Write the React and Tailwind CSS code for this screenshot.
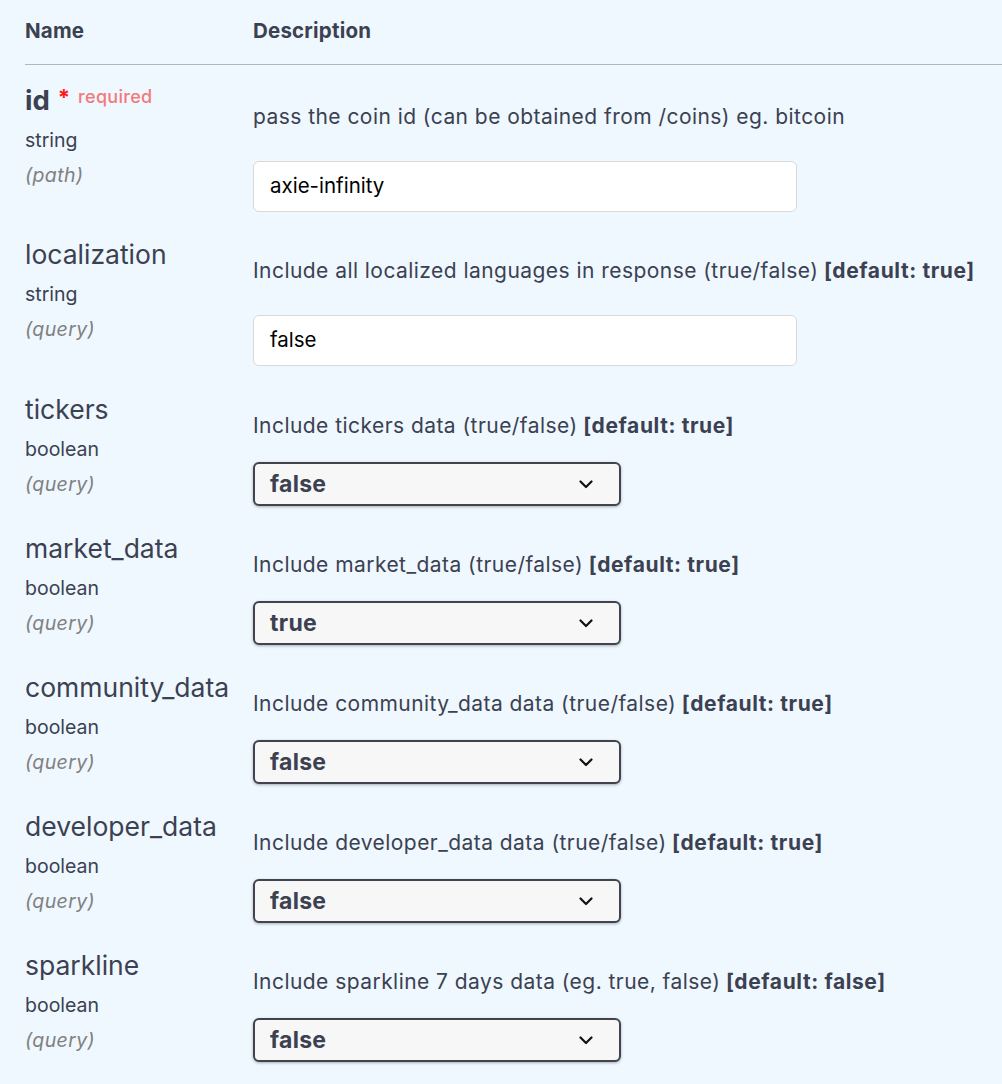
import React from "react";

const params = [
  { name: "id", type: "string", where: "(path)", required: true, desc: "pass the coin id (can be obtained from /coins) eg. bitcoin", input: "axie-infinity", pad: "pt-[20px] pb-[8px]" },
  { name: "localization", type: "string", where: "(query)", desc: "Include all localized languages in response (true/false)", def: "[default: true]", input: "false", pad: "pt-[19px] pb-[9px]" },
  { name: "tickers", type: "boolean", where: "(query)", desc: "Include tickers data (true/false)", def: "[default: true]", select: "false" },
  { name: "market_data", type: "boolean", where: "(query)", desc: "Include market_data (true/false)", def: "[default: true]", select: "true" },
  { name: "community_data", type: "boolean", where: "(query)", desc: "Include community_data data (true/false)", def: "[default: true]", select: "false" },
  { name: "developer_data", type: "boolean", where: "(query)", desc: "Include developer_data data (true/false)", def: "[default: true]", select: "false" },
  { name: "sparkline", type: "boolean", where: "(query)", desc: "Include sparkline 7 days data (eg. true, false)", def: "[default: false]", select: "false" },
];

function Chevron() {
  return (
    <svg width="14" height="9" viewBox="0 0 14 9" className="shrink-0">
      <path d="M1.5 1.5 L7 7 L12.5 1.5" fill="none" stroke="#111" strokeWidth="2.2" strokeLinecap="round" strokeLinejoin="round" />
    </svg>
  );
}

function ParamRow({ p }) {
  return (
    <div className={`grid grid-cols-[228px_1fr] ${p.pad || "pt-[19px] pb-[8px]"}`}>
      <div>
        <div className="flex items-start h-[30px]">
          <span className={`leading-[30px] ${p.required ? "font-bold text-[27.5px]" : "text-[26.5px]"}`}>{p.name}</span>
          {p.required && (
            <>
              <span className="text-[#ff1a1a] text-[22px] leading-[20px] ml-[8px] mt-[2px] font-bold">*</span>
              <span className="text-[#f27a7a] text-[18px] leading-[18px] ml-[8px] mt-[3px] font-medium tracking-[0.3px]">required</span>
            </>
          )}
        </div>
        <div className="text-[19.5px] leading-[20px] mt-[15px]">{p.type}</div>
        <div className="text-[19.5px] leading-[20px] mt-[15px] italic text-[#808080] tracking-[0.4px]">{p.where}</div>
      </div>
      <div>
        <div className="text-[21px] leading-[24px] mt-[20px] tracking-[0.45px]">
          {p.desc}
          {p.def && <span className="font-bold tracking-[0.6px]"> {p.def}</span>}
        </div>
        {p.input && (
          <div className="mt-[32px] w-[544px] h-[51px] bg-white border border-[#d9d9d9] rounded-[6px] flex items-center px-[16px] text-[20.5px] text-black">
            {p.input}
          </div>
        )}
        {p.select && (
          <div className="mt-[24px] w-[368px] h-[44px] bg-[#f7f7f7] border-2 border-[#41444e] rounded-[6px] shadow-[0_1px_3px_rgba(0,0,0,0.3)] flex items-center justify-between pl-[15px] pr-[26px] text-[23px] font-bold tracking-[0.3px]">
            <span>{p.select}</span>
            <Chevron />
          </div>
        )}
      </div>
    </div>
  );
}

export default function App() {
  return (
    <div className="w-full min-h-[1084px] bg-[#eff7ff] text-[#3b4151] px-[25px]" style={{ fontFamily: "Inter, 'Noto Sans', sans-serif" }}>
      <div className="grid grid-cols-[228px_1fr] h-[65px] items-start pt-[17px] border-b border-[#b1b5be] mr-[-25px]">
        <div className="text-[20.5px] leading-[28px] font-bold tracking-[0.2px]">Name</div>
        <div className="text-[20.5px] leading-[28px] font-bold tracking-[0.2px]">Description</div>
      </div>
      {params.map((p) => (
        <ParamRow key={p.name} p={p} />
      ))}
    </div>
  );
}
